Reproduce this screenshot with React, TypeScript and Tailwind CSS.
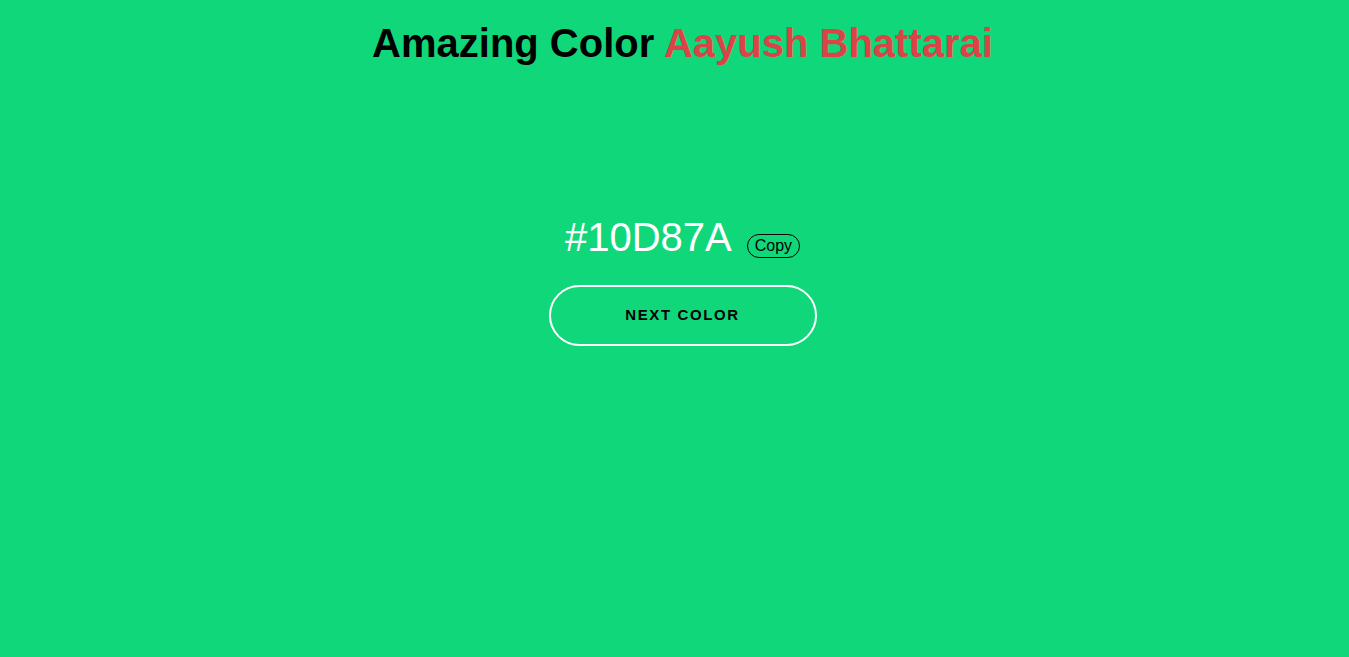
import { useState } from 'react';

const colors = ['#10D87A', '#3B82F6', '#F59E0B', '#8B5CF6', '#EF4444', '#14B8A6'];

export default function App() {
    const [idx, setIdx] = useState(0);
    const color = colors[idx];

    return (
        <div
            className="min-h-[657px] w-full pl-[16px] flex flex-col items-center font-['Liberation_Sans',Arial,sans-serif]"
            style={{ backgroundColor: color }}
        >
            <h1 className="mt-[20px] text-[40px] leading-[46px] font-bold text-black">
                Amazing Color <span className="text-[#dc4346]">Aayush Bhattarai</span>
            </h1>

            <div className="mt-[148px] flex flex-col items-center">
                <div className="flex items-baseline gap-[15px]">
                    <span className="text-[40px] leading-[46px] text-white">{color}</span>
                    <button
                        onClick={() => navigator.clipboard?.writeText(color)}
                        className="border border-black rounded-full px-[7px] text-[16px] leading-[22px] text-black"
                    >
                        Copy
                    </button>
                </div>

                <button
                    onClick={() => setIdx((idx + 1) % colors.length)}
                    className="mt-[25px] w-[268px] h-[61px] border-2 border-white rounded-full text-[15px] font-bold tracking-[1.6px] text-black"
                >
                    NEXT COLOR
                </button>
            </div>
        </div>
    );
}
